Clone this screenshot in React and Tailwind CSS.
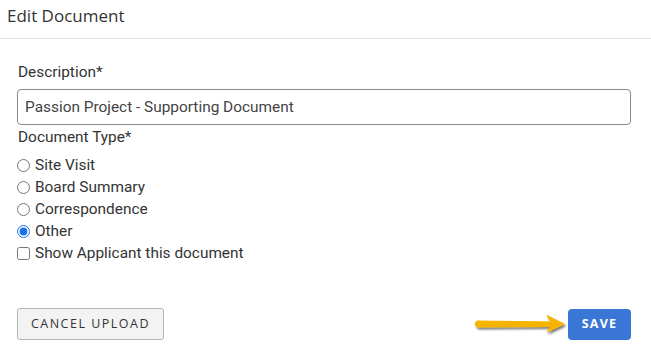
import { useState } from "react";

const types = ["Site Visit", "Board Summary", "Correspondence", "Other"];

function Arrow() {
  return (
    <svg width="94" height="24" viewBox="0 0 94 24" className="mr-[1px] overflow-visible">
      <defs>
        <filter id="sh" x="-10%" y="-50%" width="130%" height="200%">
          <feDropShadow dx="1.5" dy="2" stdDeviation="1.2" floodColor="#000" floodOpacity="0.55" />
        </filter>
      </defs>
      <g filter="url(#sh)">
        <path
          d="M4 9 L78 10 L74 3.5 L91 12 L74 20 L78 14.5 L4 15 Q0.5 12 4 9 Z"
          fill="#f5b400"
          stroke="#f5b400"
          strokeWidth="1"
          strokeLinejoin="round"
        />
      </g>
    </svg>
  );
}

export default function App() {
  const [type, setType] = useState("Other");
  const [show, setShow] = useState(false);
  const [desc, setDesc] = useState("Passion Project - Supporting Document");

  return (
    <div className="h-[358px] w-[651px] bg-white font-['Roboto',sans-serif] text-[#333]">
      <div className="h-[39px] border-b border-[#e5e5e5] pl-[7px] pt-[4px]">
        <h2 className="font-['Open_Sans',sans-serif] text-[17px] leading-[24px] text-[#333]">
          Edit Document
        </h2>
      </div>
      <div className="pl-[17px] pr-[20px] pt-[23px]">
        <label className="block pl-[1px] text-[15.4px] leading-[20px] text-[#333]">Description*</label>
        <input
          value={desc}
          onChange={(e) => setDesc(e.target.value)}
          className="mt-[7px] block h-[36px] w-[614px] rounded-[4px] border border-[#8a8a8a] px-[7px] text-[15.4px] text-[#444] outline-none"
        />
        <div className="mt-[2px] pl-[1px] text-[15.4px] leading-[20px]">Document Type*</div>
        <div className="mt-[7px] flex flex-col">
          {types.map((t) => (
            <label key={t} className="flex h-[22px] items-center text-[15.4px] leading-[20px]">
              <input
                type="radio"
                name="doctype"
                checked={type === t}
                onChange={() => setType(t)}
                className="m-0 mr-[5px] h-[13px] w-[13px] accent-[#1a73e8]"
              />
              {t}
            </label>
          ))}
          <label className="flex h-[22px] items-center text-[15.4px] leading-[20px]">
            <input
              type="checkbox"
              checked={show}
              onChange={(e) => setShow(e.target.checked)}
              className="m-0 mr-[5px] h-[13px] w-[13px]"
            />
            Show Applicant this document
          </label>
        </div>
        <div className="mt-[44px] flex items-center justify-between">
          <button className="h-[32px] w-[147px] rounded-[3px] border border-[#b5b5b5] bg-[#f3f3f3] font-['Open_Sans',sans-serif] text-[12.5px] tracking-[0.12em] text-[#333]">
            CANCEL UPLOAD
          </button>
          <div className="flex items-center">
            <Arrow />
            <button className="h-[31px] w-[63px] rounded-[4px] bg-[#3a76d6] font-['Open_Sans',sans-serif] text-[12.5px] font-bold tracking-[0.1em] text-white">
              SAVE
            </button>
          </div>
        </div>
      </div>
    </div>
  );
}
